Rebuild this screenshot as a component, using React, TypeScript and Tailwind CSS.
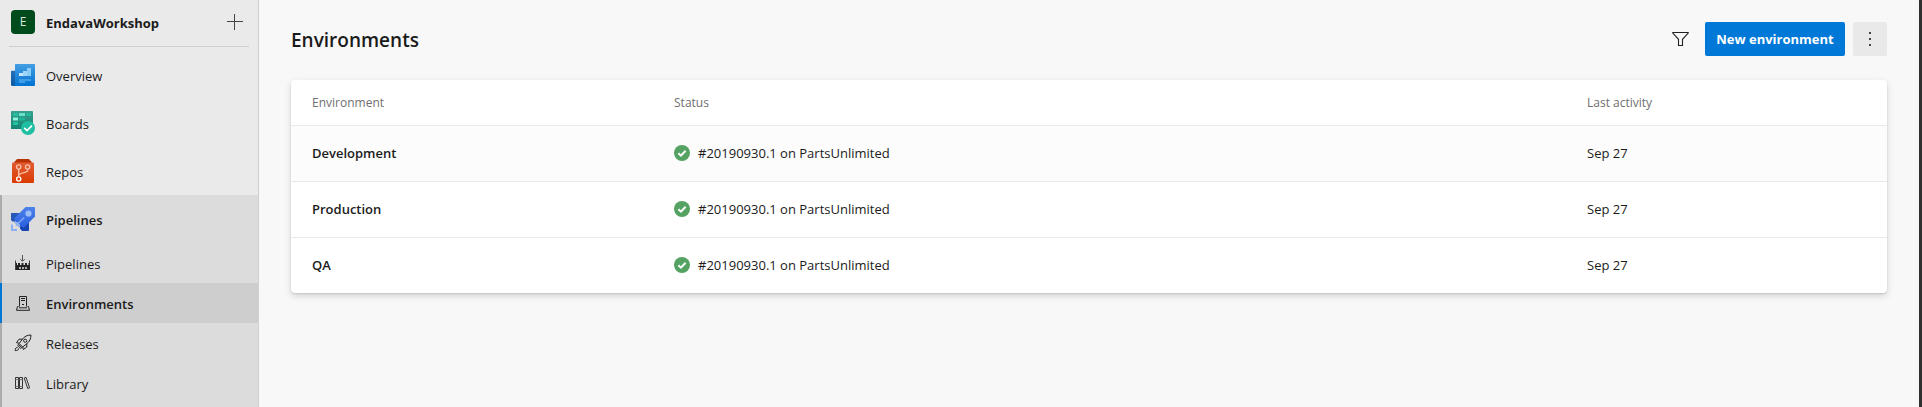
import type { ReactNode } from "react";

function OverviewIcon() {
  return (
    <svg width="24" height="24" viewBox="0 0 24 24" aria-hidden="true">
      <defs>
        <linearGradient id="overviewFace" x1="0" y1="0" x2="0" y2="1">
          <stop offset="0" stopColor="#449ee3" />
          <stop offset="1" stopColor="#0273d2" />
        </linearGradient>
        <linearGradient id="overviewBack" x1="0" y1="0" x2="0" y2="1">
          <stop offset="0" stopColor="#2272b9" />
          <stop offset="1" stopColor="#0a59a4" />
        </linearGradient>
      </defs>
      <path d="M0 8.500a.8.8 0 0 1 .8-.8H5V23H1.500A1.500 1.500 0 0 1 0 21.500z" fill="url(#overviewBack)" />
      <path d="M4 1.600A.6.6 0 0 1 4.600 1H23.400a.6.6 0 0 1 .6.6V22a1 1 0 0 1-1 1H2.600C3.500 22.700 4 22 4 21z" fill="url(#overviewFace)" />
      <path d="M8 10h4v3H8z" fill="#c3e6fb" />
      <path d="M12 8h4v5h-4z" fill="#a3d5f8" />
      <path d="M16 5h4v8h-4z" fill="#8accf9" />
      <path d="M8 16h12v2h-6v2H8z" fill="#3f9ce6" />
    </svg>
  );
}

function BoardsIcon() {
  return (
    <svg width="24" height="24" viewBox="0 0 24 24" aria-hidden="true">
      <defs>
        <linearGradient id="boardsFace" x1="0" y1="0" x2="0" y2="1">
          <stop offset="0" stopColor="#38a08c" />
          <stop offset="1" stopColor="#158573" />
        </linearGradient>
      </defs>
      <rect width="22" height="18" rx=".6" fill="url(#boardsFace)" />
      <path d="M2 2h5v3H2z" fill="#25c0a0" />
      <path d="M8 2h6v3H8z" fill="#65e2c8" />
      <path d="M15 2h5v3h-5z" fill="#25b89a" />
      <path d="M2 6.500h5v3H2z" fill="#8cf5dc" />
      <path d="M8 6.500h6v3H8z" fill="#1fb497" />
      <path d="M2 11h5v3H2z" fill="#1fc2a3" />
      <circle cx="17" cy="17" r="7" fill="#1ebfa3" />
      <path d="M13.200 16.800l2.800 2.800 5-5" fill="none" stroke="#fff" strokeWidth="1.700" />
    </svg>
  );
}

function ReposIcon() {
  return (
    <svg width="24" height="24" viewBox="0 0 24 24" aria-hidden="true">
      <defs>
        <linearGradient id="reposFace" x1="0" y1="0" x2="0" y2="1">
          <stop offset="0" stopColor="#e05c33" />
          <stop offset="1" stopColor="#dc3a02" />
        </linearGradient>
      </defs>
      <path d="M5 1.500Q5 0 6.500 0h11Q19 0 19 1.500L20.500 2.200V4h-17V2.200z" fill="#b93203" />
      <rect x="1" y="3.500" width="22" height="20.500" rx="1" fill="url(#reposFace)" />
      <g fill="none" stroke="#f9c0a8" strokeWidth="1.400">
        <circle cx="7.700" cy="8" r="2.100" />
        <circle cx="16.600" cy="8" r="2.100" />
        <circle cx="7.700" cy="20" r="2.100" stroke="#fff" />
        <path d="M7.700 10.200v7.600M16.600 10.200v1.600c0 2-8.900 1.700-8.900 4.900" />
      </g>
    </svg>
  );
}

function PipelinesIcon() {
  return (
    <svg width="24" height="24" viewBox="0 0 24 24" aria-hidden="true">
      <defs>
        <linearGradient id="rocketBody" x1="0" y1="0" x2="0" y2="1">
          <stop offset="0" stopColor="#4e82ea" />
          <stop offset="1" stopColor="#285fdf" />
        </linearGradient>
      </defs>
      <path d="M0 6.600A.6.6 0 0 1 .6 6H9L6 15 1.500 14.500 0 13z" fill="#2558b8" />
      <path d="M18 14v9.300a.7.700 0 0 1-.7.700H11l-2-2.500V18z" fill="#1746b4" />
      <path d="M14.500 0H23.300a.7.700 0 0 1 .7.700V9.500L12.500 21 9.500 18.500 5.500 14.500 3 11.500z" fill="url(#rocketBody)" />
      <circle cx="17.500" cy="6.500" r="3.100" fill="#9dbdf6" />
      <path d="M5 18.500L13.200 10.500" stroke="#86abf5" strokeWidth="1.500" />
      <path d="M0 17.500h2V22h4v2H0z" fill="#8eb0f2" />
      <path d="M3.500 14.500l5.500 5.500" stroke="#8eb0f2" strokeWidth="2" />
    </svg>
  );
}

function FactoryIcon() {
  return (
    <svg width="16" height="16" viewBox="0 0 16 16" aria-hidden="true">
      <path d="M7.500 0v6M5.200 4l2.300 2.300L9.800 4" fill="none" stroke="#555" strokeWidth="1" />
      <path d="M.5 5.500V15M14.500 5.500V15" stroke="#444" strokeWidth="1" />
      <path d="M1 10h14v5H1zM3 8h2v2H3zM6.500 8h2v2h-2zM10 8h2v2h-2zM1 8h1v2H1zM13.500 8h1v2h-1z" fill="#222" />
      <path d="M4 13h2M7 13h2M10 13h2" stroke="#dcdcdc" strokeWidth="1.500" />
    </svg>
  );
}

function ServerIcon() {
  return (
    <svg width="16" height="16" viewBox="0 0 16 16" fill="none" stroke="#222" strokeWidth="1" aria-hidden="true">
      <path d="M4.500 11.500v-10h7v10" />
      <path d="M6 3.500h4M6 5.500h4M7 9.500h2" />
      <path d="M3.500 11.500H2.500L1.500 15.300h13l-1-3.800h-1M4 12.800h8" />
    </svg>
  );
}

function RocketIcon() {
  return (
    <svg width="18" height="18" viewBox="0 0 18 18" fill="none" stroke="#222" strokeWidth="1" aria-hidden="true">
      <path d="M17 1c-4 .1-6.500 1.500-8.500 4L5.200 9.500l3.500 3.500L13 9.500C15.500 7.500 16.900 5 17 1z" />
      <circle cx="11.200" cy="6.700" r="1.600" />
      <path d="M8.300 5.200H5L2.500 8.700l2.900.5M12.800 9.700V13l-3.500 2.500-.5-2.700M4.400 10.300l3.400 3.400-1.300.6-2.700-2.700z" />
      <path d="M3.700 13.300c-1.700.1-2.500 1-2.500 3.300 2.300 0 3.600-.8 3.600-2.300" />
    </svg>
  );
}

function LibraryIcon() {
  return (
    <svg width="16" height="16" viewBox="0 0 16 16" fill="none" stroke="#333" strokeWidth="1" aria-hidden="true">
      <path d="M.5 2.500h3v11h-3zM4.500 2.500h3v11h-3z" />
      <path d="M.5 4.500h3M4.500 4.500h3M.5 11.500h3M4.500 11.500h3" stroke="#777" />
      <path d="M9.200 3l1.900-.6 3.500 10.400-1.900.7z" />
    </svg>
  );
}

function CheckBadge() {
  return (
    <svg width="16" height="16" viewBox="0 0 16 16" className="shrink-0" role="img" aria-label="Success">
      <circle cx="8" cy="8" r="8" fill="#55a362" />
      <path d="M4.400 8.200l2.500 2.400 4.700-4.900" fill="none" stroke="#fff" strokeWidth="2" />
    </svg>
  );
}

const services: { label: string; icon: ReactNode }[] = [
  { label: "Overview", icon: <OverviewIcon /> },
  { label: "Boards", icon: <BoardsIcon /> },
  { label: "Repos", icon: <ReposIcon /> },
];

const pipelinePages: { label: string; icon: ReactNode; active?: boolean }[] = [
  { label: "Pipelines", icon: <FactoryIcon /> },
  { label: "Environments", icon: <ServerIcon />, active: true },
  { label: "Releases", icon: <RocketIcon /> },
  { label: "Library", icon: <LibraryIcon /> },
];

const environments = [
  { name: "Development", run: "#20190930.1 on PartsUnlimited", date: "Sep 27", hovered: true },
  { name: "Production", run: "#20190930.1 on PartsUnlimited", date: "Sep 27" },
  { name: "QA", run: "#20190930.1 on PartsUnlimited", date: "Sep 27" },
];

function Sidebar() {
  return (
    <aside className="flex w-[259px] shrink-0 flex-col border-r border-[#cfcfcf] bg-[#eaeaea]">
      <div className="mx-[9px] flex h-[47px] items-start border-b border-[#cecece] pt-[10px] pl-[2px]">
        <span className="flex size-6 items-center justify-center rounded bg-[#004b1c] text-xs text-[#d9e4dc]">E</span>
        <a href="#project" className="ml-[11px] pt-px leading-6 font-bold">EndavaWorkshop</a>
        <button type="button" aria-label="Create new" className="mt-1 mr-1.5 ml-auto">
          <svg width="16" height="16" viewBox="0 0 16 16" stroke="#444" strokeWidth="1">
            <path d="M0 7.500h16M7.500 0v16" />
          </svg>
        </button>
      </div>
      <nav className="mt-1 flex grow flex-col">
        {services.map((s) => (
          <a key={s.label} href={"#" + s.label} className="flex h-12 items-center gap-[11px] pl-[11px]">
            {s.icon}
            <span className="pt-0.5">{s.label}</span>
          </a>
        ))}
        <div className="grow border-l-2 border-[#acacac] bg-[#dcdcdc]">
          <a href="#pipelines" className="flex h-12 items-center gap-[11px] pl-[9px] font-semibold">
            <PipelinesIcon />
            <span className="pt-0.5">Pipelines</span>
          </a>
          {pipelinePages.map((p) => (
            <a
              key={p.label}
              href={"#" + p.label}
              aria-current={p.active ? "page" : undefined}
              className={
                p.active
                  ? "-ml-0.5 flex h-10 items-center gap-[11px] border-l-2 border-[#0078d4] bg-[#cecece] pl-[9px] font-semibold"
                  : "flex h-10 items-center gap-[11px] pl-[9px]"
              }
            >
              <span className="flex w-6 justify-center">{p.icon}</span>
              <span className="pt-0.5">{p.label}</span>
            </a>
          ))}
        </div>
      </nav>
    </aside>
  );
}

export default function App() {
  return (
    <div className="flex min-h-screen bg-[#f8f8f8] font-['Open_Sans','Noto_Sans',sans-serif] text-[13px] leading-5 text-[#1b1b1b]">
      <Sidebar />
      <main className="min-w-0 grow border-r-3 border-[#303030] px-8 pt-[22px]">
        <header className="flex h-[34px] items-center">
          <h1 className="grow pt-0.5 text-[19px] leading-7 font-semibold">Environments</h1>
          <button type="button" aria-label="Filter" className="mr-4">
            <svg width="17" height="16" viewBox="0 0 17 16" fill="none" stroke="#222" strokeWidth="1.100">
              <path d="M.8 1.500h15.400v.6L10.500 8.300v6.200h-4V8.300L.8 2.100z" />
            </svg>
          </button>
          <button type="button" className="h-full w-[140px] rounded-xs bg-[#0078d7] font-bold text-white">
            New environment
          </button>
          <button type="button" aria-label="More options" className="ml-2 flex h-full w-[34px] items-center justify-center rounded-xs bg-[#e9e9e9]">
            <svg width="2" height="14" viewBox="0 0 2 14" fill="#444">
              <path d="M0 0h2v2H0zM0 6h2v2H0zM0 12h2v2H0z" />
            </svg>
          </button>
        </header>
        <div className="mt-6 overflow-hidden rounded bg-white shadow-[0_3px_7px_rgba(0,0,0,0.14),0_1px_2px_rgba(0,0,0,0.12)]">
          <table className="w-full table-fixed text-left">
            <thead>
              <tr className="h-[45px] text-xs text-[#707070]">
                <th className="w-[24%] pt-0.5 pl-[21px] font-normal">Environment</th>
                <th className="pt-0.5 font-normal">Status</th>
                <th className="w-[300px] pt-0.5 font-normal">Last activity</th>
              </tr>
            </thead>
            <tbody>
              {environments.map((e) => (
                <tr key={e.name} className={e.hovered ? "h-14 border-t border-[#e9e9e9] bg-[#fcfcfc]" : "h-14 border-t border-[#e9e9e9]"}>
                  <td className="pl-[21px] font-semibold">{e.name}</td>
                  <td>
                    <span className="flex items-center gap-2">
                      <CheckBadge />
                      {e.run}
                    </span>
                  </td>
                  <td>{e.date}</td>
                </tr>
              ))}
            </tbody>
          </table>
        </div>
      </main>
    </div>
  );
}
